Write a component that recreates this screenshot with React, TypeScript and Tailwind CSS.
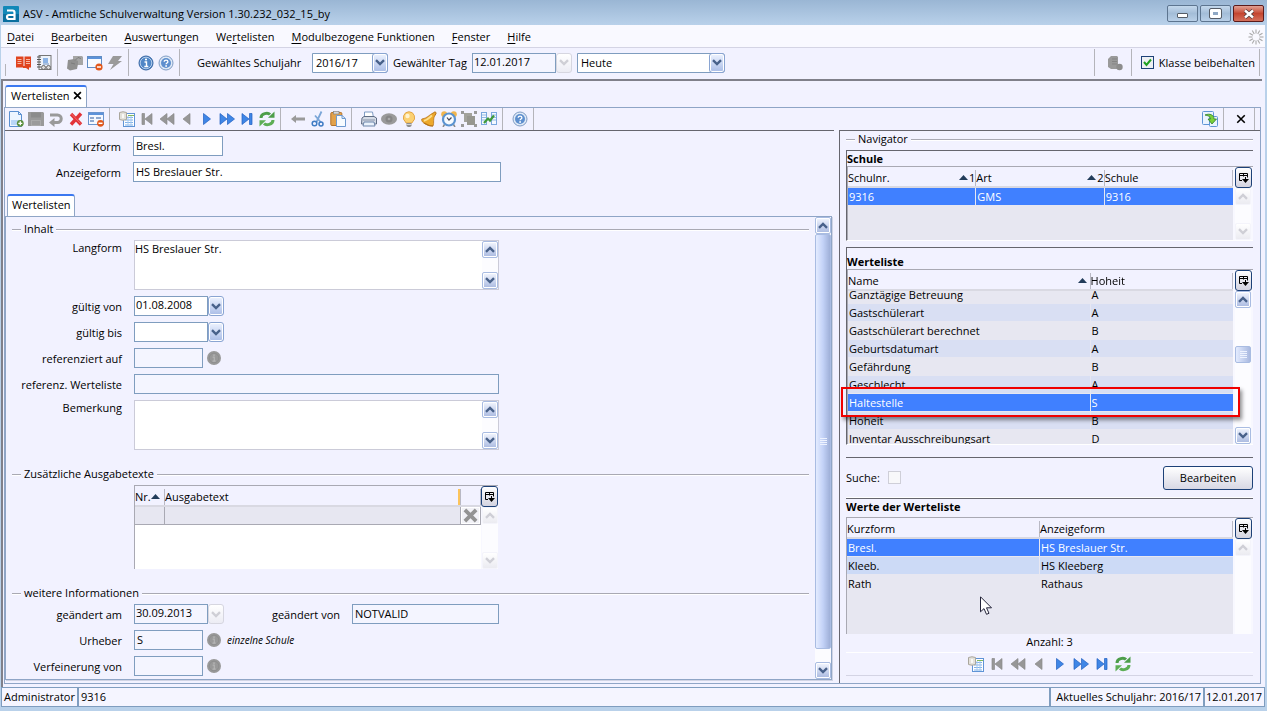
import { useEffect, useRef } from "react";
import type { ReactNode } from "react";
import clsx from "clsx";

/* ---------- icons ---------- */

function Svg({ children, className = "size-4" }: { children: ReactNode; className?: string }) {
  return (
    <svg viewBox="0 0 16 16" className={clsx("shrink-0", className)} fill="none" aria-hidden="true">
      {children}
    </svg>
  );
}

const GRAY = "#9a9a9a";

const ManualIcon = () => (
  <Svg>
    <path d="M0 1.500h7.500v11H0zM8.500 1.500H15v11H8.500z" fill="#e0431f" />
    <path d="M7 11l6 0v4l-3-2H7z" fill="#e0431f" />
    <path d="M1.500 4.500h4M1.500 6.500h4M1.500 8.500h4M10 4.500h4M10 6.500h4M10 8.500h4" stroke="#f9b8a6" />
  </Svg>
);

const AddressBookIcon = () => (
  <Svg>
    <rect x="3" y=".5" width="12" height="14" fill="#eef3fa" stroke="#777" />
    <path d="M1 2h4M1 4.500h4M1 7h4M1 9.500h4M1 12h4" stroke="#555" />
    <path d="M7 3h5v5H7z" fill="#8db4e6" />
    <path d="M7 9h6" stroke="#6b8fc0" />
    <rect x="5.500" y="10.500" width="4" height="4" rx="2" fill="#ddd" stroke="#666" />
    <rect x="10.500" y="10.500" width="4" height="4" rx="2" fill="#ddd" stroke="#666" />
  </Svg>
);

const AssignIcon = () => (
  <Svg>
    <path d="M6 1h9l1 1v8H6z" fill="#a5a5a5" />
    <path d="M1 5l6-1 4 2v3l-1 5-7 1.500-3-2z" fill="#909090" />
    <path d="M8 5.500l3-3 3 1M4 8l4 1" stroke="#7c7c7c" />
  </Svg>
);

const WindowMinusIcon = () => (
  <Svg>
    <rect x=".5" y="1.500" width="14" height="11" fill="#f6faff" stroke="#5f8cc4" />
    <path d="M1 3h13" stroke="#5c92da" strokeWidth="2" />
    <circle cx="12" cy="12" r="3.600" fill="#e2581c" />
    <path d="M10 12h4" stroke="#fff" strokeWidth="1.500" />
  </Svg>
);

const BoltIcon = () => (
  <Svg>
    <path d="M6 1h9l-4 5h4L3 15l3.500-6H1z" fill={GRAY} />
  </Svg>
);

const InfoIcon = () => (
  <Svg>
    <circle cx="8" cy="8" r="7" fill="#4f86c6" stroke="#3565a3" />
    <circle cx="8" cy="8" r="5.800" stroke="#cfe0f5" strokeWidth=".8" />
    <path d="M6.500 7h2v4.500M6.300 11.500h4" stroke="#fff" strokeWidth="1.400" />
    <circle cx="8" cy="4.500" r="1.100" fill="#fff" />
  </Svg>
);

const HelpIcon = () => (
  <Svg>
    <circle cx="8" cy="8" r="7" fill="#dfe9f6" stroke="#7f9cc4" />
    <circle cx="8" cy="8" r="5" fill="#5e8fce" />
    <path d="M6.200 6.800c0-2.300 3.700-2.300 3.700 0 0 1.300-1.800 1.200-1.800 2.500" stroke="#fff" strokeWidth="1.300" />
    <circle cx="8.100" cy="11" r=".9" fill="#fff" />
  </Svg>
);

const ServerIcon = () => (
  <Svg>
    <path d="M1 4l3-3h6l1 1v12H4l-3-2z" fill={GRAY} />
    <path d="M5 4h5M5 6.500h5M5 9h5" stroke="#858585" />
    <circle cx="12.500" cy="12" r="3.200" fill="#8d8d8d" />
  </Svg>
);

const NewDocIcon = () => (
  <Svg>
    <path d="M1.500.5h9l3 3v12h-12z" fill="#edf5ff" stroke="#5a8fd0" />
    <path d="M10.500.5v3h3" stroke="#5a8fd0" />
    <path d="M3 9h9v5H3z" fill="#b9d6f7" />
    <circle cx="12.300" cy="12.300" r="3.400" fill="#5a8f3c" />
    <path d="M12.300 10.300v4M10.300 12.300h4" stroke="#fff" strokeWidth="1.300" />
  </Svg>
);

const SaveIcon = () => (
  <Svg>
    <path d="M0 1h15l1 1v13H0z" fill={GRAY} />
    <path d="M3 1.500h10v5H3z" fill="#8c8c8c" />
    <path d="M3 9h10v6H3z" fill="#aaa" />
    <path d="M4 11h8M4 13h8" stroke="#8c8c8c" />
  </Svg>
);

const UndoIcon = () => (
  <Svg>
    <path d="M2 4h7.500a3.500 3.500 0 0 1 0 7.500H5" stroke={GRAY} strokeWidth="3" />
    <path d="M6.500 7v9L1 11.500z" fill={GRAY} />
  </Svg>
);

const DeleteIcon = () => (
  <Svg>
    <path d="M3 3l10 10.500M13 2.500L3 13.500" stroke="#e23338" strokeWidth="3.400" />
    <path d="M3.500 3l9 9.500" stroke="#f0686a" />
  </Svg>
);

const FormMinusIcon = () => (
  <Svg>
    <rect x=".5" y="1.500" width="15" height="12" fill="#f4f8ff" stroke="#6a95cf" />
    <path d="M1 3h14" stroke="#5c92da" strokeWidth="2" />
    <path d="M2 7h4M8 7h5M2 10h4" stroke="#6d8fc0" strokeWidth="1.500" />
    <circle cx="12.500" cy="12.300" r="3.400" fill="#e2581c" />
    <path d="M10.500 12.300h4" stroke="#fff" strokeWidth="1.500" />
  </Svg>
);

const ListIcon = () => (
  <Svg>
    <rect x="4.500" y="2.500" width="11" height="13" fill="#fff" stroke="#5f94d6" />
    <path d="M6 6.500h8M6 9h8M6 11.500h8M6 14h8" stroke="#7fb0e8" />
    <path d="M9 5v10M12 5v10" stroke="#a8cbf0" />
    <path d="M9 4.500h6" stroke="#83b95c" />
    <path d="M.5 1.500q3.500-1.500 7 0v7q-3.500 1.500-7 0z" fill="#e3e1da" stroke="#aaa69c" />
    <path d="M4 3v4" stroke="#fff" strokeWidth="1.500" />
  </Svg>
);

function NavIcon({ kind, active }: { kind: "first" | "rew" | "prev" | "next" | "ff" | "last"; active?: boolean }) {
  const fill = active ? "#3f86e6" : "#979797";
  const stroke = active ? "#1f5fc0" : "#8a8a8a";
  const paths = {
    first: "M3 2.500h2.500v11H3zM13 2.500v11L6 8z",
    rew: "M8 2.500v11L1 8zM15 2.500v11L8 8z",
    prev: "M11 2.500v11L4 8z",
    next: "M4.500 2.500v11L11.500 8z",
    ff: "M1 2.500v11L8 8zM8.500 2.500v11L15.500 8z",
    last: "M3 2.500v11L10 8zM10.500 2.500H13v11h-2.500z",
  };
  return (
    <Svg>
      <path d={paths[kind]} fill={fill} stroke={stroke} strokeWidth=".7" />
    </Svg>
  );
}

const RefreshIcon = () => (
  <Svg>
    <path d="M2 7c0-5 7-5.500 9-3.500" stroke="#4d9e4a" strokeWidth="3" />
    <path d="M9 6.800l6.500 0V.5z" fill="#4d9e4a" />
    <path d="M14 9c0 5-7 5.500-9 3.500" stroke="#5dae55" strokeWidth="3" />
    <path d="M7 9.200H.5v6.300z" fill="#5dae55" />
  </Svg>
);

const BackIcon = () => (
  <Svg>
    <path d="M15 8H4" stroke={GRAY} strokeWidth="3" />
    <path d="M6 4v8L1 8z" fill={GRAY} />
  </Svg>
);

const CutIcon = () => (
  <Svg>
    <path d="M11.500.5L6.500 11M5 4.500l6 7" stroke="#7ba6d8" strokeWidth="1.800" />
    <circle cx="4.500" cy="12.500" r="2.300" stroke="#3f7cc4" strokeWidth="1.500" />
    <circle cx="11" cy="13" r="2" stroke="#3f7cc4" strokeWidth="1.500" />
  </Svg>
);

const PasteIcon = () => (
  <Svg>
    <rect x=".8" y="1.500" width="11" height="13" rx="1" fill="#e2a24b" stroke="#b5722a" />
    <rect x="3.500" y=".5" width="5.500" height="2.500" fill="#d9d9d9" stroke="#888" strokeWidth=".7" />
    <path d="M6.500 4.500h5.500l3.500 3v8h-9z" fill="#f7fbff" stroke="#6d99d0" />
    <path d="M12 4.500v3h3" stroke="#6d99d0" />
  </Svg>
);

const PrintIcon = () => (
  <Svg>
    <path d="M3.500 1h8l1 6h-9z" fill="#fff" stroke="#7f9cc4" />
    <path d="M1 7l2-1.500h10L15.500 7v6H.5z" fill="#d5dbe6" stroke="#5f6d85" />
    <path d="M3 11h10l1 4H2z" fill="#eaf2fc" stroke="#6d85ab" />
    <path d="M2 9h12" stroke="#8794ab" />
  </Svg>
);

const EyeIcon = () => (
  <Svg>
    <ellipse cx="8" cy="8" rx="8" ry="5.800" fill={GRAY} />
    <circle cx="8" cy="8" r="3.500" fill="#868686" />
    <circle cx="8" cy="8" r="1.300" fill="#aaa" />
  </Svg>
);

const BulbIcon = () => (
  <Svg>
    <path d="M8 .7a5.800 5.800 0 0 1 3.500 10.300l-.5 1H5l-.5-1A5.800 5.800 0 0 1 8 .7z" fill="#fbd173" stroke="#dd9830" strokeWidth=".8" />
    <circle cx="6.500" cy="5" r="2.200" fill="#fff3cf" />
    <path d="M5.500 12h5v3l-1.500 1H7l-1.500-1z" fill="#8e8e8e" />
    <path d="M5.500 13.500h5" stroke="#d4d4d4" />
  </Svg>
);

const BellIcon = () => (
  <Svg>
    <path d="M12 2C8 4 6 7.500.8 8c-.5 1.500.5 3 2 4 3 2 6.500 3.500 9.200 3 1.500-3.500-.5-7 2-11z" fill="#eda92c" stroke="#b8741a" strokeWidth=".8" />
    <path d="M11 4.500C8.500 6.500 6.500 9 3 9.800" stroke="#fcdf8c" strokeWidth="1.800" />
    <path d="M11.500 2.500L14 .8l1.200 1-1 2.500" fill="#eda92c" stroke="#b8741a" />
    <path d="M3 12c3 2 6 3 9 3" stroke="#b8741a" strokeWidth="1.200" />
  </Svg>
);

const ClockIcon = () => (
  <Svg>
    <circle cx="3.200" cy="3.200" r="3" fill="#f0b54e" />
    <circle cx="12.800" cy="3.200" r="3" fill="#f0b54e" />
    <path d="M3.500 13.500L2 16M12.500 13.500L14 16" stroke="#8a8a8a" strokeWidth="1.500" />
    <circle cx="8" cy="8.500" r="6" fill="#f7fbff" stroke="#5b93d0" strokeWidth="2.200" />
    <path d="M6 6.500l2 2.500 2.500-2.500" stroke="#445" strokeWidth="1.200" />
  </Svg>
);

const GroupIcon = () => (
  <Svg>
    <path d="M0 0h3v3H0zM13 0h3v3h-3zM0 13h3v3H0zM13 13h3v3h-3z" fill={GRAY} />
    <path d="M3 2h8v9H3z" fill="#a3a39c" />
    <path d="M6 5h8v9H6z" fill="#979790" />
  </Svg>
);

const CompareIcon = () => (
  <Svg>
    <rect x=".5" y="1.500" width="5" height="12" fill="#f4f9ff" stroke="#7aa7de" />
    <rect x="10.500" y="1.500" width="5" height="12" fill="#f4f9ff" stroke="#7aa7de" />
    <path d="M1 4h4M1 6.500h4M1 9h4M11 4h4M11 6.500h4M11 9h4" stroke="#93bae6" />
    <path d="M3 12L7 7.500l2 2L13 4.500" stroke="#3f9a3c" strokeWidth="2.200" />
  </Svg>
);

const ExportIcon = () => (
  <Svg>
    <rect x=".5" y=".5" width="11" height="13" rx="1" fill="#eaf3ff" stroke="#5f94d6" />
    <rect x="7.500" y="5.500" width="8" height="10" rx="1" fill="#eaf3ff" stroke="#5f94d6" />
    <path d="M3 4c5-2 9 0 9 4h2.500L10 13 6 8h2.500C8.500 5.500 6 4.500 3 4z" fill="#7bd03a" stroke="#2c7d2a" strokeWidth=".8" />
  </Svg>
);

const CrossIcon = ({ className = "size-[9px]", color = "#000", weight = 3 }: { className?: string; color?: string; weight?: number }) => (
  <Svg className={className}>
    <path d="M2 2l12 12M14 2L2 14" stroke={color} strokeWidth={weight} />
  </Svg>
);

const SpinnerIcon = () => (
  <Svg>
    {[0, 30, 60, 90, 120, 150, 180, 210, 240, 270, 300, 330].map((a) => (
      <path key={a} d="M8 .5v4" stroke="#a9a9a9" strokeWidth="1.100" transform={`rotate(${a} 8 8)`} />
    ))}
  </Svg>
);

const Chevron = ({ up, muted }: { up?: boolean; muted?: boolean }) => (
  <svg viewBox="0 0 10 7" className={clsx("w-[10px] h-[7px] shrink-0", up && "rotate-180")} fill="none" aria-hidden="true">
    <path d="M1 1.200l4 3.800 4-3.800" stroke={muted ? "#cfcfd6" : "#48618a"} strokeWidth="2.400" />
  </svg>
);

const SortArrow = () => (
  <svg viewBox="0 0 9 5" className="w-[9px] h-[5px] shrink-0" aria-hidden="true">
    <path d="M0 5L4.500 0 9 5z" fill="#223c5a" />
  </svg>
);

/* ---------- small controls ---------- */

function ToolButton({ label, children, className = "w-5" }: { label: string; children: ReactNode; className?: string }) {
  return (
    <button type="button" aria-label={label} className={clsx("h-5 flex items-center justify-center shrink-0", className)}>
      {children}
    </button>
  );
}

const Sep = ({ className = "ml-[3px] mr-[7px]" }: { className?: string }) => (
  <div className={clsx("w-px self-stretch bg-[#b4b4ba]", className)} />
);

const dropFace = "w-4 rounded-[3px] border flex items-center justify-center shrink-0";
const dropOn = "border-[#8aa5d2] bg-linear-to-b from-[#eef3ff] to-[#a9bce6] shadow-[inset_0_0_0_1px_#ffffff]";
const dropOff = "border-[#d6d6e0] bg-linear-to-b from-white to-[#ececf4]";

function Select({ id, value, className }: { id: string; value: string; className: string }) {
  return (
    <div className={clsx("relative flex h-5", className)}>
      <select id={id} aria-label={id} className="appearance-none w-full h-full bg-white border border-[#7f9dbf] rounded-r-[3px] pl-[3px]">
        <option>{value}</option>
      </select>
      <span className={clsx("absolute right-0 inset-y-0 pointer-events-none", dropFace, dropOn)}>
        <Chevron />
      </span>
    </div>
  );
}

function DateField({ id, value = "", disabled, className = "w-[74px]" }: { id: string; value?: string; disabled?: boolean; className?: string }) {
  return (
    <div className="flex h-5">
      <input
        id={id}
        readOnly
        defaultValue={value}
        className={clsx("border border-[#7f9dbf] pl-px pb-[2px]", className, disabled ? "bg-[#f4f5ff]" : "bg-white")}
      />
      <button type="button" aria-label="Kalender" disabled={disabled} className={clsx(dropFace, disabled ? dropOff : dropOn)}>
        <Chevron muted={disabled} />
      </button>
    </div>
  );
}

function TextField({ id, value = "", disabled, className }: { id: string; value?: string; disabled?: boolean; className: string }) {
  return (
    <input
      id={id}
      readOnly
      defaultValue={value}
      className={clsx("h-5 border border-[#7f9dbf] pl-[2px] pb-[2px]", className, disabled ? "bg-[#f4f5ff]" : "bg-white")}
    />
  );
}

function ScrollButton({ up, muted }: { up?: boolean; muted?: boolean }) {
  return (
    <button
      type="button"
      aria-label={up ? "Nach oben" : "Nach unten"}
      className={clsx(
        "w-4 h-[17px] flex items-center justify-center shrink-0 rounded-[2px] border",
        muted
          ? "border-[#f4f4fb] bg-linear-to-b from-white to-[#ebebf1]"
          : "border-[#a9bce2] bg-linear-to-b from-[#f4f7ff] to-[#a9b9e0] shadow-[inset_0_0_0_1px_#ffffff]",
      )}
    >
      <Chevron up={up} muted={muted} />
    </button>
  );
}

function Scrollbar({ muted, hideDown, children }: { muted?: boolean; hideDown?: boolean; children?: ReactNode }) {
  return (
    <div className="w-4 shrink-0 flex flex-col bg-[#fcfcff]">
      <ScrollButton up muted={muted} />
      <div className="flex-1 min-h-0 flex flex-col items-center">{children}</div>
      {!hideDown && <ScrollButton muted={muted} />}
    </div>
  );
}

const Grip = () => (
  <span className="flex flex-col gap-px">
    {[0, 1, 2, 3].map((i) => (
      <i key={i} className="w-[7px] h-px bg-[#eef3ff]" />
    ))}
  </span>
);

function TextBox({ id, value = "" }: { id: string; value?: string }) {
  return (
    <div className="flex w-[365px] h-[50px] border border-[#cbcbd8] bg-white">
      <textarea id={id} readOnly defaultValue={value} className="flex-1 resize-none overflow-hidden leading-4 outline-none" />
      <Scrollbar />
    </div>
  );
}

function ColumnControl() {
  return (
    <button
      type="button"
      aria-label="Spalten"
      className="w-[17px] h-[21px] shrink-0 rounded-[3px] border border-[#1d4178] bg-linear-to-b from-white to-[#d3d3e0] flex items-center justify-center"
    >
      <svg viewBox="0 0 11 11" className="size-[11px]" fill="none" aria-hidden="true">
        <path d="M4 8.500H1.500v-7h8v4M1.500 3.500h8M5.500 1.500v3M7.500 5v3" stroke="#000" />
        <path d="M4 7h7l-3.500 4z" fill="#000" />
      </svg>
    </button>
  );
}

function InfoDot() {
  return (
    <Svg className="size-[14px] ml-1">
      <circle cx="8" cy="8" r="8" fill="#999" />
      <circle cx="8" cy="8" r="5.500" stroke="#8c8c8c" />
      <path d="M6.500 7h1.800v4.500M6.300 11.500h3.600" stroke="#b5b5b5" strokeWidth="1.300" />
      <circle cx="8" cy="4.700" r="1" fill="#b5b5b5" />
    </Svg>
  );
}

function Rule({ title }: { title: string }) {
  return (
    <div className="flex items-center h-4 gap-[3px]">
      <span className="w-[9px] h-px bg-[#a9a9b3] shadow-[0_1px_0_#ffffff]" />
      <h2>{title}</h2>
      <span className="flex-1 h-px bg-[#a9a9b3] shadow-[0_1px_0_#ffffff]" />
    </div>
  );
}

function Row({ label, htmlFor, children, top }: { label: string; htmlFor?: string; children: ReactNode; top?: boolean }) {
  return (
    <div className={clsx("flex", top ? "items-start" : "items-center")}>
      <label htmlFor={htmlFor} className={clsx("w-[110px] mr-3 text-right whitespace-nowrap leading-4", !top && "pt-[2px]")}>
        {label}
      </label>
      {children}
    </div>
  );
}

/* ---------- tables ---------- */

type Column = { title: string; width: string; sort?: string };

type GridProps = {
  columns: Column[];
  rows: string[][];
  selected: number;
  stripe: string;
  offset?: number;
  className: string;
  scrollbar: ReactNode;
};

function DataGrid({ columns, rows, selected, stripe, offset = 0, className, scrollbar }: GridProps) {
  const body = useRef<HTMLDivElement>(null);

  useEffect(() => {
    if (body.current) body.current.scrollTop = offset;
  }, [offset]);

  return (
    <div className={clsx("flex border-t border-l border-[#a9a9b3]", className)}>
      <div ref={body} className="flex-1 overflow-hidden bg-[#e7e7f1]">
        <table className="w-full table-fixed border-separate border-spacing-0">
          <thead>
            <tr>
              {columns.map((c) => (
                <th
                  key={c.title}
                  className={clsx("sticky top-0 h-[21px] p-0 pt-[2px] font-normal text-left bg-[#f2f2ff] border-b-2 border-[#d9d9e2]", c.width)}
                >
                  <span className="flex items-center h-4 border-r border-[#b9b9c4]">
                    <span className="flex-1">{c.title}</span>
                    {c.sort !== undefined && <SortArrow />}
                    <span className={c.sort ? "ml-px" : "w-[3px]"}>{c.sort}</span>
                  </span>
                </th>
              ))}
            </tr>
          </thead>
          <tbody>
            {rows.map((r, i) => (
              <tr key={r[0]} className={clsx(i === selected ? "bg-[#4080ff] text-white" : i % 2 === 1 && stripe)}>
                {r.map((cell, j) => (
                  <td
                    key={j}
                    className={clsx(
                      "h-[18px] p-0 pl-px leading-4 whitespace-nowrap border-b border-[#e7e7f1]",
                      j < r.length - 1 && "border-r",
                    )}
                  >
                    {cell}
                  </td>
                ))}
              </tr>
            ))}
          </tbody>
        </table>
      </div>
      <div className="w-5 shrink-0 flex flex-col items-center bg-[#f8f8ff]">
        <ColumnControl />
        <div className="flex-1 min-h-0 flex">{scrollbar}</div>
      </div>
    </div>
  );
}

const schools = [["9316", "GMS", "9316"]];

const valueLists = [
  ["Ganztägige Betreuung", "A"],
  ["Gastschülerart", "A"],
  ["Gastschülerart berechnet", "B"],
  ["Geburtsdatumart", "A"],
  ["Gefährdung", "B"],
  ["Geschlecht", "A"],
  ["Haltestelle", "S"],
  ["Hoheit", "B"],
  ["Inventar Ausschreibungsart", "D"],
];

const values = [
  ["Bresl.", "HS Breslauer Str."],
  ["Kleeb.", "HS Kleeberg"],
  ["Rath", "Rathaus"],
];

/* ---------- page parts ---------- */

function RecordNav({ className = "w-5" }: { className?: string }) {
  return (
    <>
      <ToolButton label="Liste" className={className}><ListIcon /></ToolButton>
      <ToolButton label="Erster" className={className}><NavIcon kind="first" /></ToolButton>
      <ToolButton label="Zurückspulen" className={className}><NavIcon kind="rew" /></ToolButton>
      <ToolButton label="Vorheriger" className={className}><NavIcon kind="prev" /></ToolButton>
      <ToolButton label="Nächster" className={className}><NavIcon kind="next" active /></ToolButton>
      <ToolButton label="Vorspulen" className={className}><NavIcon kind="ff" active /></ToolButton>
      <ToolButton label="Letzter" className={className}><NavIcon kind="last" active /></ToolButton>
      <ToolButton label="Aktualisieren" className={className}><RefreshIcon /></ToolButton>
    </>
  );
}

function TitleBar() {
  const win = "w-[31px] h-[17px] rounded-[2px] border flex items-center justify-center";
  const glass = "border-[#5d7590] bg-linear-to-b from-[#c4d8ec] via-[#a3bdd8] to-[#b9d0e8]";
  return (
    <header className="h-[25px] shrink-0 flex items-center px-[3px] pt-[2px] bg-linear-to-b from-[#9ab6d4] to-[#b9d1ea]">
      <svg viewBox="0 0 16 16" className="size-4" fill="none" aria-hidden="true">
        <rect width="16" height="16" rx="1" fill="#1288b8" />
        <path d="M0 8h16v8H0z" fill="#0a6f9f" />
        <path d="M4 4.500h5.500q2 0 2 2V13H6q-2 0-2-2t2-2h5" stroke="#fff" strokeWidth="2.200" />
      </svg>
      <h1 className="ml-1 flex-1">ASV - Amtliche Schulverwaltung Version 1.30.232_032_15_by</h1>
      <div className="flex gap-[2px]">
        <button type="button" aria-label="Minimieren" className={clsx(win, glass)}>
          <span className="w-[11px] h-[5px] mt-1 bg-white border border-[#555c66] rounded-[1px]" />
        </button>
        <button type="button" aria-label="Maximieren" className={clsx(win, glass)}>
          <span className="w-[11px] h-[9px] bg-[#8fa8c4] border-3 border-white outline outline-[#555c66] rounded-[1px]" />
        </button>
        <button type="button" aria-label="Schließen" className={clsx(win, "border-[#5b1a1a] bg-linear-to-b from-[#e0a094] via-[#c4452f] to-[#d4705c]")}>
          <svg viewBox="0 0 12 10" className="w-3 h-[10px]" fill="none" aria-hidden="true">
            <path d="M2 1.500l8 7M10 1.500l-8 7" stroke="#4a3a3a" strokeWidth="3.800" />
            <path d="M2 1.500l8 7M10 1.500l-8 7" stroke="#fff" strokeWidth="2.400" />
          </svg>
        </button>
      </div>
    </header>
  );
}

const menu = [
  ["", "D", "atei"],
  ["", "B", "earbeiten"],
  ["", "A", "uswertungen"],
  ["We", "r", "telisten"],
  ["", "M", "odulbezogene Funktionen"],
  ["", "F", "enster"],
  ["", "H", "ilfe"],
];

function MenuBar() {
  return (
    <nav className="h-[23px] shrink-0 flex items-center gap-[17px] pl-[6px] pt-px bg-[#f9f9ff] border-b border-[#d4d4e4]">
      {menu.map(([pre, key, rest]) => (
        <button key={key} type="button" className="whitespace-nowrap">
          {pre}
          <u className="underline-offset-2">{key}</u>
          {rest}
        </button>
      ))}
      <span className="ml-auto mr-px">
        <SpinnerIcon />
      </span>
    </nav>
  );
}

function MainToolbar() {
  return (
    <div className="h-[31px] shrink-0 flex items-center pl-[4px] pt-px pb-[3px]">
      <span className="w-px h-3 self-end bg-[#b4b4ba] mr-2" />
      <ToolButton label="Handbuch"><ManualIcon /></ToolButton>
      <ToolButton label="Adressbuch"><AddressBookIcon /></ToolButton>
      <Sep />
      <ToolButton label="Zuordnen"><AssignIcon /></ToolButton>
      <ToolButton label="Fenster schließen"><WindowMinusIcon /></ToolButton>
      <ToolButton label="Blitz"><BoltIcon /></ToolButton>
      <Sep />
      <ToolButton label="Info"><InfoIcon /></ToolButton>
      <ToolButton label="Hilfe"><HelpIcon /></ToolButton>
      <Sep />
      <label htmlFor="schuljahr" className="ml-[10px] w-[115px] whitespace-nowrap">Gewähltes Schuljahr</label>
      <Select id="schuljahr" value="2016/17" className="w-[76px]" />
      <label htmlFor="tag" className="ml-[5px] w-[79px] whitespace-nowrap">Gewählter Tag</label>
      <DateField id="tag" value="12.01.2017" disabled className="w-[84px]" />
      <span className="w-[5px]" />
      <Select id="heute" value="Heute" className="w-[148px]" />
      <Sep className="ml-auto mr-[7px]" />
      <ToolButton label="Server" className="w-[26px]"><ServerIcon /></ToolButton>
      <Sep />
      <label className="flex items-center ml-[2px] gap-[5px] whitespace-nowrap">
        <span className="relative flex size-[13px]">
          <input type="checkbox" defaultChecked className="appearance-none size-[13px] border border-[#1d4178] bg-[#eef0f4]" />
          <svg viewBox="0 0 13 13" className="absolute inset-0 pointer-events-none" fill="none" aria-hidden="true">
            <path d="M3 6l2.500 3L10 3.500" stroke="#21a121" strokeWidth="2" />
          </svg>
        </span>
        Klasse beibehalten
      </label>
      <Sep className="ml-1 mr-[5px]" />
    </div>
  );
}

function ModuleToolbar() {
  return (
    <div className="h-[22px] shrink-0 flex items-center pl-px pr-[5px]">
      <ToolButton label="Neu"><NewDocIcon /></ToolButton>
      <ToolButton label="Speichern"><SaveIcon /></ToolButton>
      <ToolButton label="Rückgängig"><UndoIcon /></ToolButton>
      <ToolButton label="Löschen"><DeleteIcon /></ToolButton>
      <ToolButton label="Formular schließen"><FormMinusIcon /></ToolButton>
      <Sep />
      <RecordNav />
      <Sep />
      <ToolButton label="Zurück"><BackIcon /></ToolButton>
      <ToolButton label="Ausschneiden"><CutIcon /></ToolButton>
      <ToolButton label="Einfügen"><PasteIcon /></ToolButton>
      <Sep />
      <ToolButton label="Drucken"><PrintIcon /></ToolButton>
      <ToolButton label="Vorschau"><EyeIcon /></ToolButton>
      <ToolButton label="Hinweis"><BulbIcon /></ToolButton>
      <ToolButton label="Erinnerung"><BellIcon /></ToolButton>
      <ToolButton label="Wiedervorlage"><ClockIcon /></ToolButton>
      <ToolButton label="Gruppieren"><GroupIcon /></ToolButton>
      <ToolButton label="Vergleichen"><CompareIcon /></ToolButton>
      <Sep />
      <ToolButton label="Modulhilfe"><HelpIcon /></ToolButton>
      <Sep />
      <span className="ml-auto">
        <ToolButton label="Exportieren"><ExportIcon /></ToolButton>
      </span>
      <Sep />
      <ToolButton label="Modul schließen"><CrossIcon className="size-[10px]" weight={2.5} /></ToolButton>
      <Sep className="ml-[3px]" />
    </div>
  );
}

function OutputTexts() {
  return (
    <div className="ml-[122px] w-[364px] h-[84px] flex border-t border-l border-[#a9a9b3] bg-white">
      <div className="flex-1">
        <table className="w-full table-fixed border-separate border-spacing-0">
          <thead>
            <tr className="bg-[#f2f2ff]">
              <th className="w-[30px] h-[21px] p-0 pt-[2px] font-normal border-b-2 border-[#d9d9e2]">
                <span className="flex items-center justify-between h-4 pr-1 border-r border-[#b9b9c4]">Nr.<SortArrow /></span>
              </th>
              <th className="p-0 pt-[2px] font-normal text-left border-b-2 border-[#d9d9e2]">
                <span className="flex items-center justify-between h-4 border-r border-[#b9b9c4]">
                  Ausgabetext
                  <span className="w-[2px] h-4 bg-[#fcc45c]" />
                </span>
              </th>
              <th className="w-5 p-0 pt-[2px] border-b-2 border-[#d9d9e2]">
                <span className="block h-4 border-r border-[#b9b9c4]" />
              </th>
            </tr>
          </thead>
          <tbody>
            <tr className="bg-[#e7e7f1]">
              <td className="h-[18px] p-0 border-b border-r border-[#a9a9b3]" />
              <td className="p-0 border-b border-r border-[#a9a9b3]" />
              <td className="p-0 border-b border-r border-[#a9a9b3]">
                <button type="button" aria-label="Zeile löschen" className="w-full h-[17px] flex items-center justify-center bg-[#f2f2f7] border border-white">
                  <CrossIcon className="size-[15px]" color="#939393" weight={4} />
                </button>
              </td>
            </tr>
          </tbody>
        </table>
      </div>
      <div className="flex flex-col w-[17px] items-center bg-[#f8f8ff]">
        <ColumnControl />
        <div className="flex-1 min-h-0 flex"><Scrollbar muted /></div>
      </div>
    </div>
  );
}

function RecordForm() {
  return (
    <main className="flex-1 min-w-0 flex flex-col border-t border-[#66666e]">
      <div className="flex flex-col gap-[6px] pt-[5px] pl-[6px]">
        <Row label="Kurzform" htmlFor="kurzform">
          <TextField id="kurzform" value="Bresl." className="w-[90px]" />
        </Row>
        <Row label="Anzeigeform" htmlFor="anzeigeform">
          <TextField id="anzeigeform" value="HS Breslauer Str." className="w-[368px]" />
        </Row>
      </div>

      <div className="mt-3 pl-[2px] flex">
        <button type="button" className="h-[22px] pl-1 pr-[3px] pb-[2px] bg-white border-x border-[#8fa5c6] border-t-2 border-t-[#3b78f0] rounded-t-[3px] whitespace-nowrap">
          Wertelisten
        </button>
      </div>

      <div className="flex-1 min-h-0 flex mr-[2px] mb-[3px] border border-[#8fa5c6] shadow-[1px_1px_0_#d0d4e4]">
        <div className="flex-1 min-w-0 overflow-hidden px-[6px] pt-1 flex flex-col gap-4">
          <section className="flex flex-col gap-[3px]">
            <Rule title="Inhalt" />
            <div className="flex flex-col gap-[6px]">
              <Row label="Langform" htmlFor="langform" top><TextBox id="langform" value="HS Breslauer Str." /></Row>
              <Row label="gültig von" htmlFor="von"><DateField id="von" value="01.08.2008" /></Row>
              <Row label="gültig bis" htmlFor="bis"><DateField id="bis" /></Row>
              <Row label="referenziert auf" htmlFor="refauf">
                <TextField id="refauf" disabled className="w-[69px]" />
                <InfoDot />
              </Row>
              <Row label="referenz. Werteliste" htmlFor="refliste"><TextField id="refliste" disabled className="w-[365px]" /></Row>
              <Row label="Bemerkung" htmlFor="bemerkung" top><TextBox id="bemerkung" /></Row>
            </div>
          </section>

          <section className="flex flex-col gap-[3px]">
            <Rule title="Zusätzliche Ausgabetexte" />
            <OutputTexts />
          </section>

          <section className="flex flex-col gap-[3px]">
            <Rule title="weitere Informationen" />
            <div className="flex flex-col gap-[6px]">
              <Row label="geändert am" htmlFor="am">
                <DateField id="am" value="30.09.2013" disabled />
                <label htmlFor="geaendertvon" className="w-[116px] mr-3 pt-[2px] text-right">geändert von</label>
                <TextField id="geaendertvon" value="NOTVALID" disabled className="w-[147px]" />
              </Row>
              <Row label="Urheber" htmlFor="urheber">
                <TextField id="urheber" value="S" disabled className="w-[69px]" />
                <InfoDot />
                <em className="ml-[6px] text-[10px]">einzelne Schule</em>
              </Row>
              <Row label="Verfeinerung von" htmlFor="verfeinerung">
                <TextField id="verfeinerung" disabled className="w-[69px]" />
                <InfoDot />
              </Row>
            </div>
          </section>
        </div>
        <Scrollbar>
          <div className="w-full h-[97%] rounded-[2px] border border-[#a9bce2] bg-linear-to-r from-[#e4ecff] via-[#c3d2f7] to-[#9fb0d8] flex items-center justify-center">
            <Grip />
          </div>
        </Scrollbar>
      </div>
    </main>
  );
}

function Navigator() {
  return (
    <aside className="w-[421px] shrink-0 ml-[5px] pl-[6px] pr-[7px] flex flex-col border-t border-l border-[#66666e]">
      <Rule title="Navigator" />

      <section className="mt-[3px] border-t border-l border-[#66666e] border-b border-b-white">
        <h3 className="h-[15px] leading-4 font-bold">Schule</h3>
        <DataGrid
          columns={[
            { title: "Schulnr.", width: "w-1/3", sort: "1" },
            { title: "Art", width: "w-1/3", sort: "2" },
            { title: "Schule", width: "w-1/3" },
          ]}
          rows={schools}
          selected={0}
          stripe=""
          className="h-[74px]"
          scrollbar={<Scrollbar muted />}
        />
      </section>

      <section className="relative mt-[6px] border-t border-l border-[#66666e] border-b border-b-white">
        <h3 className="h-[21px] pt-[6px] leading-4 font-bold">Werteliste</h3>
        <DataGrid
          columns={[
            { title: "Name", width: "w-[63%]", sort: "" },
            { title: "Hoheit", width: "w-[37%]" },
          ]}
          rows={valueLists}
          selected={6}
          stripe="bg-[#d9dff3]"
          offset={5}
          className="h-[175px]"
          scrollbar={
            <Scrollbar>
              <div className="mt-[38px] w-full h-[17px] rounded-[2px] border border-[#a9bce2] bg-linear-to-r from-[#e4ecff] to-[#a9b9e0] flex items-center justify-center">
                <Grip />
              </div>
            </Scrollbar>
          }
        />
        {/* highlight around the selected list */}
        <div className="absolute z-10 top-[139px] -left-[6px] right-[13px] h-[30px] border-2 border-[#f00000] shadow-[2px_3px_4px_rgba(0,0,0,0.45)] pointer-events-none" />
      </section>

      <div className="mt-3 h-[41px] flex items-center justify-between border-t border-[#66666e] border-b border-b-white">
        <label className="flex items-center gap-2">
          Suche:
          <input type="checkbox" className="appearance-none size-[13px] border border-[#cfcfd8] bg-[#f8f8fa]" />
        </label>
        <button type="button" className="w-[90px] h-6 rounded-[3px] border border-[#1d4178] bg-linear-to-b from-white to-[#d8d8e4]">
          Bearbeiten
        </button>
      </div>

      <section className="flex-1 min-h-0 flex flex-col border-t border-[#66666e]">
        <h3 className="h-[18px] leading-4 font-bold">Werte der Werteliste</h3>
        <DataGrid
          columns={[
            { title: "Kurzform", width: "w-1/2" },
            { title: "Anzeigeform", width: "w-1/2" },
          ]}
          rows={values}
          selected={0}
          stripe="bg-[#ccdaf6]"
          className="flex-1 min-h-0"
          scrollbar={<Scrollbar muted hideDown />}
        />
        <p className="h-[18px] text-center leading-4">Anzahl: 3</p>
        <div className="h-6 mb-[7px] flex items-center justify-center border-t border-t-white border-b border-b-[#d4d4e4]">
          <RecordNav className="w-[21px]" />
        </div>
      </section>
    </aside>
  );
}

function StatusBar() {
  const cell = "border border-[#7f9dbf] px-[2px] flex items-center whitespace-nowrap bg-[#f5f5ff]";
  return (
    <footer className="h-5 shrink-0 flex">
      <div className={clsx(cell, "w-[77px]")}>Administrator</div>
      <div className={clsx(cell, "flex-1")}>9316</div>
      <div className={clsx(cell, "w-[154px] justify-end")}>Aktuelles Schuljahr: 2016/17</div>
      <div className={clsx(cell, "w-[61px] justify-end")}>12.01.2017</div>
    </footer>
  );
}

export default function App() {
  return (
    <div className="h-screen min-h-[700px] flex flex-col overflow-hidden bg-[#b9d1ea] text-[11px] leading-4 text-black font-['Open_Sans','Noto_Sans',sans-serif]">
      <TitleBar />
      <div className="flex-1 min-h-0 flex flex-col ml-px mr-[2px] mb-1 bg-[#f2f2ff]">
        <MenuBar />
        <MainToolbar />
        <div className="flex-1 min-h-0 flex flex-col border-t-2 border-l-2 border-[#80808a] px-px mr-[3px]">
          <div className="h-[26px] shrink-0 flex items-end pl-px">
            <div className="h-[22px] pl-[5px] pr-1 pb-[3px] flex items-center gap-[3px] bg-white border-x border-[#8fa5c6] border-t-2 border-t-[#3b78f0] rounded-t-[3px] whitespace-nowrap">
              Wertelisten
              <button type="button" aria-label="Tab schließen"><CrossIcon /></button>
            </div>
          </div>
          <div className="flex-1 min-h-0 flex flex-col border border-[#8fa5c6] mb-[3px]">
            <ModuleToolbar />
            <div className="flex-1 min-h-0 flex">
              <RecordForm />
              <Navigator />
            </div>
          </div>
        </div>
        <StatusBar />
      </div>
      {/* mouse pointer */}
      <svg viewBox="0 0 12 19" className="absolute left-[980px] top-[596px] w-3 h-[19px] pointer-events-none" aria-hidden="true">
        <path d="M.5.8v15l3.500-3.200 2.500 5.700 2.500-1-2.500-5.500h5z" fill="#fff" stroke="#222238" />
      </svg>
    </div>
  );
}
